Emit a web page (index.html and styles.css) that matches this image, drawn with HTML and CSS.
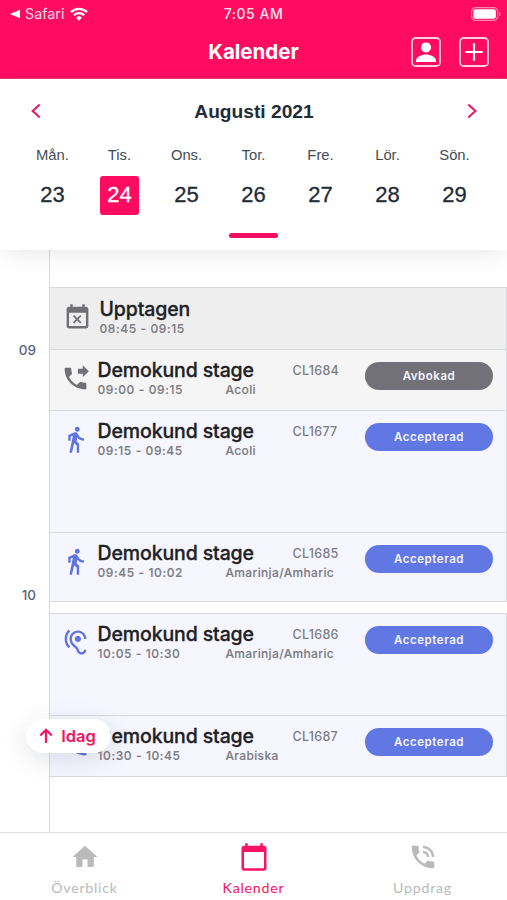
FILE: index.html
```html
<!DOCTYPE html>
<html lang="sv">
<head>
  <meta charset="UTF-8" />
  <meta name="viewport" content="width=device-width, initial-scale=1" />
  <title>Kalender</title>
  <link rel="stylesheet" href="styles.css">
</head>
<body>
  <!-- Walking icon, used by both on-site bookings -->
  <svg class="sprite" aria-hidden="true">
    <symbol id="walk" viewBox="0 0 24 24"><path d="M13.5 5.5c1.1 0 2-.9 2-2s-.9-2-2-2-2 .9-2 2 .9 2 2 2zM9.8 8.9L7 23h2.1l1.8-8 2.1 2v6h2v-7.5l-2.1-2 .6-3C14.8 12 16.8 13 19 13v-2c-1.9 0-3.5-1-4.3-2.4l-1-1.6c-.4-.6-1-1-1.7-1-.3 0-.5.1-.8.1L6 8.3V13h2V9.6l1.8-.7"/></symbol>
  </svg>

  <div class="app">
    <header class="top">
      <div class="status-bar">
        <div class="status-left">
          <svg class="back-tri" viewBox="0 0 10 10"><path d="M0 5L10 .8v8.4z"/></svg>
          <span class="status-app">Safari</span>
          <svg class="wifi" viewBox="0 0 18 14">
            <path d="M9 13.8l2.9-3a4.1 4.1 0 0 0-5.8 0z"/>
            <path class="arc" d="M3.8 8.2a7.4 7.4 0 0 1 10.4 0M1 5.1a11.4 11.4 0 0 1 16 0"/>
          </svg>
        </div>
        <span class="status-time">7:05 AM</span>
        <div class="status-right">
          <svg class="battery" viewBox="0 0 30 14">
            <rect class="shell" x=".6" y=".6" width="26" height="12.8" rx="4"/>
            <rect x="2.3" y="2.3" width="22.6" height="9.4" rx="2.3"/>
            <path class="cap" d="M28 4.7v4.6a2.4 2.4 0 0 0 0-4.6z"/>
          </svg>
        </div>
      </div>
      <div class="title-bar">
        <h1 class="title">Kalender</h1>
        <div class="actions">
          <svg class="action" viewBox="0 0 30 30">
            <rect class="frame" x="1" y="1" width="28" height="28" rx="3.6"/>
            <circle cx="15" cy="10.4" r="5"/>
            <path d="M5 25v-1.6c0-3.8 6-6 10-6s10 2.2 10 6V25z"/>
          </svg>
          <svg class="action" viewBox="0 0 30 30">
            <rect class="frame" x="1" y="1" width="28" height="28" rx="3.6"/>
            <path class="plus" d="M15 6.3v17.4M6.3 15h17.4"/>
          </svg>
        </div>
      </div>
    </header>

    <section class="week">
      <div class="month-row">
        <svg class="chevron" viewBox="0 0 10 16"><path d="M8.7 1.5L1.6 8l7.1 6.5"/></svg>
        <h2 class="month">Augusti 2021</h2>
        <svg class="chevron" viewBox="0 0 10 16"><path d="M1.3 1.5L8.4 8l-7.1 6.5"/></svg>
      </div>
      <div class="days">
        <div class="day"><span class="day-name">Mån.</span><span class="day-num">23</span></div>
        <div class="day active"><span class="day-name">Tis.</span><span class="day-num">24</span></div>
        <div class="day"><span class="day-name">Ons.</span><span class="day-num">25</span></div>
        <div class="day"><span class="day-name">Tor.</span><span class="day-num">26</span></div>
        <div class="day"><span class="day-name">Fre.</span><span class="day-num">27</span></div>
        <div class="day"><span class="day-name">Lör.</span><span class="day-num">28</span></div>
        <div class="day"><span class="day-name">Sön.</span><span class="day-num">29</span></div>
      </div>
      <div class="handle"></div>
    </section>

    <main class="timeline">
      <div class="hours">
        <div class="hour">09</div>
        <div class="hour">10</div>
      </div>
      <div class="events">
        <div class="event busy">
          <svg class="event-icon" viewBox="0 0 24 24"><path d="M9.31 17l2.44-2.44L14.19 17l1.06-1.06-2.44-2.44 2.44-2.44L14.19 10l-2.44 2.44L9.31 10l-1.06 1.06 2.44 2.44-2.44 2.44L9.31 17zM19 3h-1V1h-2v2H8V1H6v2H5c-1.11 0-1.99.9-1.99 2L3 19c0 1.1.89 2 2 2h14c1.1 0 2-.9 2-2V5c0-1.1-.9-2-2-2zm0 16H5V8h14v11z"/></svg>
          <div class="event-text">
            <span class="event-title">Upptagen</span>
            <span class="event-time">08:45 - 09:15</span>
          </div>
        </div>
        <div class="event cancelled">
          <svg class="event-icon" viewBox="0 0 24 24"><path d="M18 11l5-5-5-5v3h-4v4h4v3zm2 4.5c-1.25 0-2.45-.2-3.57-.57-.35-.11-.74-.03-1.02.24l-2.2 2.2c-2.83-1.44-5.15-3.75-6.59-6.59l2.2-2.21c.28-.26.36-.65.25-1C8.7 6.45 8.5 5.25 8.5 4c0-.55-.45-1-1-1H4c-.55 0-1 .45-1 1 0 9.39 7.61 17 17 17 .55 0 1-.45 1-1v-3.5c0-.55-.45-1-1-1z"/></svg>
          <div class="event-text">
            <span class="event-title">Demokund stage</span>
            <span class="event-id">CL1684</span>
            <span class="event-time">09:00 - 09:15</span>
            <span class="event-lang">Acoli</span>
          </div>
          <span class="pill">Avbokad</span>
        </div>
        <div class="event long">
          <svg class="event-icon"><use href="#walk"/></svg>
          <div class="event-text">
            <span class="event-title">Demokund stage</span>
            <span class="event-id">CL1677</span>
            <span class="event-time">09:15 - 09:45</span>
            <span class="event-lang">Acoli</span>
          </div>
          <span class="pill">Accepterad</span>
        </div>
        <div class="event short last">
          <svg class="event-icon"><use href="#walk"/></svg>
          <div class="event-text">
            <span class="event-title">Demokund stage</span>
            <span class="event-id">CL1685</span>
            <span class="event-time">09:45 - 10:02</span>
            <span class="event-lang">Amarinja/Amharic</span>
          </div>
          <span class="pill">Accepterad</span>
        </div>
        <div class="event medium">
          <svg class="event-icon" viewBox="0 0 24 24"><path d="M17 20c-.29 0-.56-.06-.76-.15-.71-.37-1.21-.88-1.71-2.38-.51-1.56-1.47-2.29-2.39-3-.79-.61-1.61-1.24-2.32-2.53C9.29 10.98 9 9.93 9 9c0-2.8 2.2-5 5-5s5 2.2 5 5h2c0-3.93-3.07-7-7-7S7 5.07 7 9c0 1.26.38 2.65 1.07 3.9.91 1.65 1.98 2.48 2.85 3.15.81.62 1.39 1.07 1.71 2.05.6 1.82 1.37 2.84 2.73 3.55.51.23 1.07.35 1.64.35 2.21 0 4-1.79 4-4h-2c0 1.1-.9 2-2 2zM7.64 2.64L6.22 1.22C4.23 3.21 3 5.96 3 9s1.23 5.79 3.22 7.78l1.41-1.41C6.01 13.74 5 11.49 5 9s1.01-4.74 2.64-6.36zM11.5 9c0 1.38 1.12 2.5 2.5 2.5s2.5-1.12 2.5-2.5-1.12-2.5-2.5-2.5-2.5 1.12-2.5 2.5z"/></svg>
          <div class="event-text">
            <span class="event-title">Demokund stage</span>
            <span class="event-id">CL1686</span>
            <span class="event-time">10:05 - 10:30</span>
            <span class="event-lang">Amarinja/Amharic</span>
          </div>
          <span class="pill">Accepterad</span>
        </div>
        <div class="event end">
          <svg class="event-icon" viewBox="0 0 24 24"><path d="M20 15.5c-1.25 0-2.45-.2-3.57-.57-.35-.11-.74-.03-1.02.24l-2.2 2.2c-2.83-1.44-5.15-3.75-6.59-6.59l2.2-2.21c.28-.26.36-.65.25-1C8.7 6.45 8.5 5.25 8.5 4c0-.55-.45-1-1-1H4c-.55 0-1 .45-1 1 0 9.39 7.61 17 17 17 .55 0 1-.45 1-1v-3.5c0-.55-.45-1-1-1z"/></svg>
          <div class="event-text">
            <span class="event-title">Demokund stage</span>
            <span class="event-id">CL1687</span>
            <span class="event-time">10:30 - 10:45</span>
            <span class="event-lang">Arabiska</span>
          </div>
          <span class="pill">Accepterad</span>
        </div>
      </div>

      <button class="today">
        <svg class="today-icon" viewBox="0 0 14 16"><path d="M7 15V2M1.3 7.5L7 1.8l5.7 5.7"/></svg>
        <span>Idag</span>
      </button>
    </main>

    <nav class="tabs">
      <div class="tab">
        <svg class="tab-icon" viewBox="0 0 24 24"><path d="M10 20v-6h4v6h5v-8h3L12 3 2 12h3v8z"/></svg>
        <span>Överblick</span>
      </div>
      <div class="tab active">
        <svg class="tab-icon" viewBox="0 0 24 24"><path d="M20 3h-1V1h-2v2H7V1H5v2H4c-1.1 0-2 .9-2 2v16c0 1.1.9 2 2 2h16c1.1 0 2-.9 2-2V5c0-1.1-.9-2-2-2zm0 18H4V8h16v13z"/></svg>
        <span>Kalender</span>
      </div>
      <div class="tab">
        <svg class="tab-icon" viewBox="0 0 24 24"><path d="M20 15.5c-1.25 0-2.45-.2-3.57-.57-.35-.11-.74-.03-1.02.24l-2.2 2.2c-2.83-1.44-5.15-3.75-6.59-6.59l2.2-2.21c.28-.26.36-.65.25-1C8.7 6.45 8.5 5.25 8.5 4c0-.55-.45-1-1-1H4c-.55 0-1 .45-1 1 0 9.39 7.61 17 17 17 .55 0 1-.45 1-1v-3.5c0-.55-.45-1-1-1zM19 12h2c0-4.97-4.03-9-9-9v2c3.87 0 7 3.13 7 7zm-4 0h2c0-2.76-2.24-5-5-5v2c1.66 0 3 1.34 3 3z"/></svg>
        <span>Uppdrag</span>
      </div>
    </nav>
  </div>
</body>
</html>
```
FILE: styles.css
```css
* {
  box-sizing: border-box;
}

body {
  margin: 0;
  background: #fff;
  font-family: Inter, "Liberation Sans", sans-serif;
  color: #1f2c38;
}

svg {
  display: block;
  flex: none;
  fill: currentColor;
}

.sprite {
  display: none;
}

.app {
  display: flex;
  flex-direction: column;
  height: 900px;
  overflow: hidden;
}

/* === HEADER === */
.top {
  height: 79px;
  flex: none;
  background: #ff0c60;
  border-bottom: 1px solid #e5386f;
  color: #fff;
}

.status-bar {
  display: grid;
  grid-template-columns: 1fr auto 1fr;
  align-items: center;
  height: 27px;
  padding: 0 6px;
  font-size: 14px;
}

.status-left {
  display: flex;
  align-items: center;
  padding-left: 4px;
  color: #ffd6e3;
}

.back-tri {
  width: 10px;
  height: 10px;
  margin-right: 5px;
  color: #fff;
}

.status-app {
  font-size: 14.3px;
}

.wifi {
  width: 18px;
  height: 14px;
  margin-left: 6px;
  color: #fff;
}

.wifi .arc {
  fill: none;
  stroke: currentColor;
  stroke-width: 2.3;
}

.status-time {
  font-weight: 500;
  letter-spacing: 0.5px;
  color: #ffe3ec;
}

.battery {
  width: 30px;
  height: 14px;
  margin-left: auto;
}

.battery .shell {
  fill: none;
  stroke: #ff86af;
  stroke-width: 1.2;
}

.battery .cap {
  fill: #ff86af;
}

.title-bar {
  display: grid;
  grid-template-columns: 1fr auto 1fr;
  align-items: center;
  height: 50px;
  padding: 0 18px;
}

.title {
  grid-column: 2;
  margin: 0;
  font-size: 20.5px;
  font-weight: 700;
  line-height: 26px;
}

.actions {
  display: flex;
  justify-content: flex-end;
  gap: 18px;
}

.action {
  width: 30px;
  height: 30px;
}

.action .frame {
  fill: none;
  stroke: #ffd0df;
  stroke-width: 1.8;
}

.action .plus {
  stroke: currentColor;
  stroke-width: 2.2;
}

/* === WEEK PICKER === */
.week {
  position: relative;
  z-index: 2;
  flex: none;
  display: flex;
  flex-direction: column;
  height: 171px;
  padding-top: 20px;
  background: #fff;
  box-shadow: 0 6px 22px -4px rgba(0, 0, 0, 0.1);
  font-family: "Liberation Sans", Arial, sans-serif;
}

.month-row {
  display: flex;
  align-items: center;
  justify-content: space-between;
  height: 24px;
  padding: 0 30px 0 31px;
}

.month {
  margin: 0;
  padding-top: 2px;
  font-size: 19.2px;
  font-weight: 700;
}

.chevron {
  width: 10px;
  height: 16px;
  fill: none;
  stroke: #f0145f;
  stroke-width: 2;
}

.days {
  display: grid;
  grid-template-columns: repeat(7, 67px);
  justify-content: center;
  margin-top: 22px;
}

.day {
  display: flex;
  flex-direction: column;
  align-items: center;
  gap: 11px;
}

.day-name {
  font-size: 14.8px;
  line-height: 20px;
  color: #434c54;
}

.day-num {
  width: 39px;
  height: 39px;
  border-radius: 3px;
  font-size: 22px;
  line-height: 37px;
  text-align: center;
  -webkit-text-stroke: 0.3px currentColor;
}

.day.active .day-num {
  background: #ff0c60;
  color: #fff;
}

.handle {
  width: 49px;
  height: 5px;
  margin: 18px auto 0;
  border-radius: 3px;
  background: #f90d60;
}

/* === TIMELINE === */
.timeline {
  position: relative;
  flex: 1;
  display: flex;
  min-height: 0;
}

.hours {
  width: 49px;
  padding-top: 90px;
}

.hour {
  height: 245px;
  padding-right: 13px;
  font-size: 13.5px;
  font-weight: 500;
  line-height: 20px;
  text-align: right;
  color: #5a6478;
}

.events {
  flex: 1;
  padding-top: 37px;
  border-left: 1px solid #d9d9dc;
}

.event {
  display: flex;
  align-items: flex-start;
  height: 61px;
  padding: 10px 13px 0 10.5px;
  border-top: 1px solid #d8d9dc;
  border-right: 1px solid #d8d9dc;
  background: #f5f6ff;
  color: #5f74e2;
}

.event.busy {
  height: 62px;
  padding-top: 11px;
  padding-left: 12.5px;
  background: #eee;
  color: #6f6f74;
}

.event.cancelled {
  background: #f5f5f5;
  color: #6f6f74;
}

.event.long {
  height: 122px;
}

.event.short {
  height: 70px;
}

.event.last {
  margin-bottom: 11px;
  border-bottom: 1px solid #d8d9dc;
}

.event.medium {
  height: 102px;
}

.event.end {
  height: 62px;
  border-bottom: 1px solid #d8d9dc;
}

.event-icon {
  width: 29px;
  height: 29px;
  margin-top: 3.5px;
}

.event-text {
  flex: 1;
  display: grid;
  grid-template-columns: 128px 67px 1fr;
  grid-template-rows: 21px 17px;
  margin-left: 8px;
  font-size: 12px;
  font-weight: 500;
  letter-spacing: 0.6px;
  color: #7c7c83;
  white-space: nowrap;
}

.event-title {
  grid-column: 1 / 3;
  font-size: 19.5px;
  line-height: 21px;
  letter-spacing: -0.12px;
  color: #202124;
  -webkit-text-stroke: 0.3px currentColor;
}

.event-id {
  line-height: 21px;
  font-size: 12.5px;
  letter-spacing: 0.3px;
}

.event-time,
.event-lang {
  line-height: 17px;
  -webkit-text-stroke: 0.15px currentColor;
}

.event-time {
  grid-column: 1;
}

.event-lang {
  grid-column: 2 / 4;
  letter-spacing: 0.35px;
}

.pill {
  width: 128px;
  height: 28px;
  margin-top: 2px;
  border-radius: 14px;
  background: #6177e3;
  color: #f3f5ff;
  font-size: 11.5px;
  font-weight: 600;
  line-height: 28px;
  text-align: center;
  letter-spacing: 0.55px;
}

.cancelled .pill {
  background: #717177;
}

/* floating over the timeline */
.today {
  position: absolute;
  left: 26px;
  bottom: 79px;
  display: flex;
  align-items: center;
  justify-content: center;
  gap: 8px;
  width: 85px;
  height: 34px;
  padding: 0 2px 0 0;
  border: 0;
  border-radius: 17px;
  background: #fff;
  box-shadow: 0 6px 26px rgba(30, 35, 60, 0.13);
  color: #f3135f;
  font-family: inherit;
  font-size: 16.5px;
  font-weight: 600;
}

.today-icon {
  width: 14px;
  height: 16px;
  fill: none;
  stroke: currentColor;
  stroke-width: 2.2;
}

/* === TAB BAR === */
.tabs {
  flex: none;
  display: grid;
  grid-template-columns: repeat(3, 1fr);
  height: 68px;
  padding-top: 9px;
  border-top: 1px solid #e0e0e2;
  background: #fff;
}

.tab {
  display: flex;
  flex-direction: column;
  align-items: center;
  color: #bababa;
  font-family: Lato, sans-serif;
  font-size: 14.2px;
  line-height: 20px;
  letter-spacing: 0.75px;
}

.tab.active {
  color: #fa1263;
}

.tab-icon {
  width: 30px;
  height: 30px;
  margin-bottom: 6px;
}
```
